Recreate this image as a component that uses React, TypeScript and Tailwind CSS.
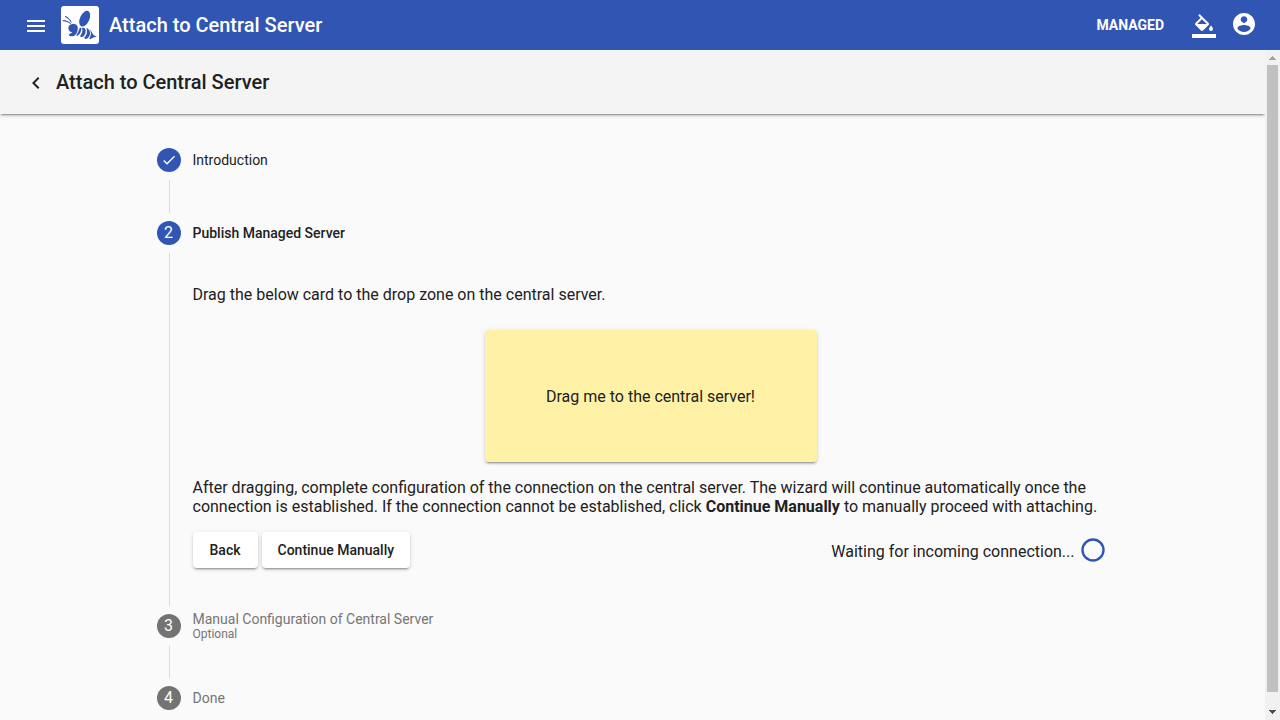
import type { ReactNode } from "react";

function BeeLogo() {
  return (
    <svg viewBox="0 0 114 114" className="size-[38px] rounded-[3px] bg-white" aria-hidden="true">
      <g fill="#3155b2">
        <ellipse cx="71" cy="38" rx="14" ry="25" transform="rotate(25 71 38)" />
        <path d="M5 42 C15 42 24 46 30 52 L28 54 C22 49 14 46 6 46 Z" />
        <path d="M13 29 C22 34 29 41 32 48 L30 50 C26 42 20 37 12 33 Z" />
        <path d="M31 55 C38 51 47 54 50 62 C52 73 47 86 38 90 C31 92 24 90 24 86 C25 82 31 83 34 79 C28 79 22 74 22 66 C22 60 26 56 31 55 Z" />
        <path d="M56 66 C60 64 62 66 61 70 C60 78 56 86 50 89 C46 90 45 87 48 84 C52 78 54 72 56 66 Z" />
        <path d="M63 66 C70 64 75 69 74 77 C73 86 68 93 61 93 C56 92 57 89 60 86 C65 80 65 73 63 66 Z" />
        <path d="M76 66 C83 68 88 74 87 83 C86 91 81 98 74 99 C69 98 69 95 73 91 C79 84 79 74 76 66 Z" />
        <path d="M86 69 C90 73 93 81 97 86 C100 89 104 91 108 92 C101 93 96 94 93 97 C90 100 85 100 85 97 C91 89 91 78 86 69 Z" />
      </g>
    </svg>
  );
}

function Step({
  marker,
  label,
  note,
  state,
  last,
  children,
}: {
  marker: ReactNode;
  label: string;
  note?: string;
  state: "done" | "current" | "upcoming";
  last?: boolean;
  children?: ReactNode;
}) {
  const upcoming = state === "upcoming";
  return (
    <li className="flex gap-3">
      <div className="flex w-6 shrink-0 flex-col">
        <span
          className={`flex size-6 shrink-0 items-center justify-center rounded-full text-base leading-none text-white ${
            upcoming ? "bg-[#737373]" : "bg-[#3155b2]"
          }`}
        >
          {marker}
        </span>
        {!last && <span className="my-2 ml-3 min-h-8 w-px grow bg-[#dadada]" />}
      </div>
      <div className="min-w-0 grow">
        <div
          className={`flex h-6 flex-col justify-center text-sm leading-4 ${
            state === "current" ? "font-medium" : ""
          } ${upcoming ? "text-[#757575]" : ""}`}
        >
          <span>{label}</span>
          {note && <span className="text-xs leading-[14px]">{note}</span>}
        </div>
        {children}
      </div>
    </li>
  );
}

const raised =
  "shadow-[0_3px_1px_-2px_rgba(0,0,0,0.2),0_2px_2px_0_rgba(0,0,0,0.14),0_1px_5px_0_rgba(0,0,0,0.12)]";

export default function App() {
  return (
    <div className="flex h-screen flex-col overflow-hidden bg-[#fafafa] font-['Roboto',sans-serif] text-base text-[#212121]">
      <header className="flex h-[50px] shrink-0 items-center bg-[#3155b2] px-6 text-white">
        <button type="button" aria-label="Menu" className="mr-[13px] pt-0.5">
          <svg viewBox="0 0 24 24" className="size-6 fill-current">
            <path d="M3 18h18v-2H3v2zm0-5h18v-2H3v2zm0-7v2h18V6H3z" />
          </svg>
        </button>
        <BeeLogo />
        <span className="ml-2.5 grow text-xl font-medium">Attach to Central Server</span>
        <span className="mr-7 text-sm font-bold">MANAGED</span>
        <button type="button" aria-label="Theme colour" className="mr-4 pt-0.5">
          <svg viewBox="0 0 24 24" className="size-6 fill-current">
            <path d="M16.56 8.94L7.62 0 6.21 1.41l2.38 2.38-5.15 5.15c-.59.59-.59 1.54 0 2.12l5.5 5.5c.29.29.68.44 1.06.44s.77-.15 1.06-.44l5.5-5.5c.59-.58.59-1.53 0-2.12zM5.21 10L10 5.21 14.79 10H5.21zM19 11.5s-2 2.17-2 3.5c0 1.1.9 2 2 2s2-.9 2-2c0-1.33-2-3.5-2-3.5zM0 20h24v4H0v-4z" />
          </svg>
        </button>
        <button type="button" aria-label="Account" className="pb-0.5">
          <svg viewBox="0 0 24 24" className="size-6 fill-current">
            <path
              transform="translate(-1.2 -1.2) scale(1.1)"
              d="M12 2C6.48 2 2 6.48 2 12s4.48 10 10 10 10-4.480 10-10S17.520 2 12 2zm0 3c1.660 0 3 1.340 3 3s-1.340 3-3 3-3-1.340-3-3 1.340-3 3-3zm0 14.200c-2.500 0-4.710-1.280-6-3.220.03-1.990 4-3.080 6-3.080 1.990 0 5.970 1.090 6 3.080-1.290 1.940-3.500 3.220-6 3.220z"
            />
          </svg>
        </button>
      </header>

      <div className="flex min-h-0 grow">
        <main className="min-w-0 grow overflow-hidden">
          <div className={`flex h-16 items-center gap-2 bg-[#f4f4f4] pl-6 ${raised}`}>
            <button type="button" aria-label="Back to servers" className="pt-0.5">
              <svg viewBox="0 0 24 24" className="size-6 fill-current">
                <path d="M15.41 7.41L14 6l-6 6 6 6 1.41-1.41L10.83 12z" />
              </svg>
            </button>
            <h1 className="text-xl font-medium">Attach to Central Server</h1>
          </div>

          <ol className="mx-auto max-w-[1000px] px-6 pt-[34px]">
            <Step
              state="done"
              label="Introduction"
              marker={
                <svg viewBox="0 0 24 24" className="size-4 fill-current">
                  <path d="M9 16.17L4.83 12l-1.42 1.41L9 19 21 7l-1.41-1.41z" />
                </svg>
              }
            >
              <div className="h-[49px]" />
            </Step>
            <Step state="current" label="Publish Managed Server" marker="2">
              <div className="pt-10 pb-[46px] leading-[19px]">
                <p>Drag the below card to the drop zone on the central server.</p>
                <div
                  draggable
                  className={`mx-auto mt-[26px] flex h-[132px] max-w-[332px] items-center justify-center rounded bg-[#fff2a6] ${raised}`}
                >
                  Drag me to the central server!
                </div>
                <p className="my-4">
                  After dragging, complete configuration of the connection on the central server. The
                  wizard will continue automatically once the connection is established. If the
                  connection cannot be established, click <b>Continue Manually</b> to manually proceed
                  with attaching.
                </p>
                <div className="flex items-center gap-1 text-sm">
                  <button
                    type="button"
                    className={`h-9 rounded bg-white px-[17px] font-medium ${raised}`}
                  >
                    Back
                  </button>
                  <button
                    type="button"
                    className={`h-9 rounded bg-white px-4 font-medium ${raised}`}
                  >
                    Continue Manually
                  </button>
                  <span className="ml-auto pt-0.5 text-base leading-[19px]">
                    Waiting for incoming connection...
                  </span>
                  <svg viewBox="0 0 24 24" className="mr-1 ml-0.5 size-6" aria-hidden="true">
                    <circle cx="12" cy="12" r="10.5" fill="none" stroke="#3155b2" strokeWidth="2.4" />
                  </svg>
                </div>
              </div>
            </Step>
            <Step
              state="upcoming"
              label="Manual Configuration of Central Server"
              note="Optional"
              marker="3"
            />
            <Step state="upcoming" label="Done" marker="4" last />
          </ol>
        </main>

        <div className="flex w-[15px] shrink-0 flex-col items-center bg-[#f1f1f1]" aria-hidden="true">
          <svg viewBox="0 0 15 15" className="size-[15px] shrink-0" shapeRendering="crispEdges">
            <path d="M4 10h7v-1h-1v-1h-1v-1h-1v-1h-1v1h-1v1h-1v1h-1z" fill="#a3a3a3" />
          </svg>
          <div className="w-[11px] grow bg-[#c1c1c1]" />
          <div className="flex h-7 shrink-0 items-end">
            <svg viewBox="0 0 15 15" className="size-[15px]" shapeRendering="crispEdges">
              <path d="M4 5h7v1h-1v1h-1v1h-1v1h-1v-1h-1v-1h-1v-1h-1z" fill="#505050" />
            </svg>
          </div>
        </div>
      </div>
    </div>
  );
}
